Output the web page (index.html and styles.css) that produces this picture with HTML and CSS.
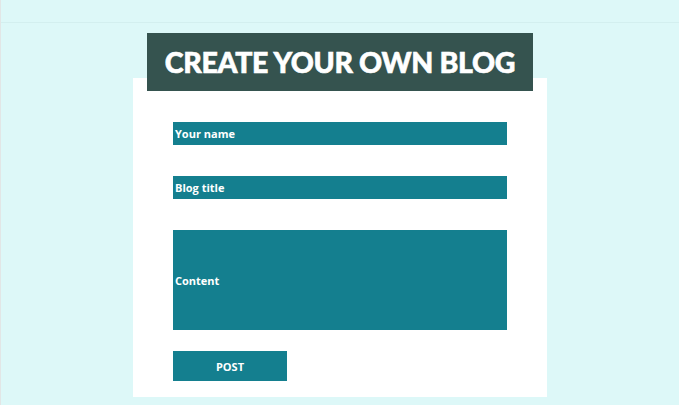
FILE: index.html
```html
<!DOCTYPE html>
<html>
<head>
<meta charset="utf-8">
<link rel="stylesheet" href="styles.css">
</head>
<body>
<div class="page">
  <div class="topband"></div>
  <main class="wrap">
    <h1 class="title">CREATE YOUR OWN BLOG</h1>
    <form class="card">
      <div class="field field-short">Your name</div>
      <div class="field field-short">Blog title</div>
      <div class="field field-tall">Content</div>
      <div class="post">POST</div>
    </form>
  </main>
</div>
</body>
</html>
```
FILE: styles.css
```css
html, body {
  margin: 0;
  padding: 0;
  background: #ddf8f8;
}
.page {
  min-height: 405px;
  border-left: 1px solid #e2e6e6;
  box-sizing: border-box;
  font-family: "Open Sans", "Liberation Sans", sans-serif;
}
.topband {
  height: 22px;
  border-bottom: 1px solid #d3efef;
}
.wrap {
  width: 414px;
  margin: 0 auto;
  padding-top: 10px;
  display: flex;
  flex-direction: column;
  align-items: center;
}
.title {
  position: relative;
  z-index: 1;
  margin: 0 0 -13px 0;
  width: 386px;
  height: 58px;
  box-sizing: border-box;
  background: #35534f;
  color: #ffffff;
  font-family: "Lato", "Open Sans", sans-serif;
  font-weight: 900;
  font-size: 28.5px;
  letter-spacing: -0.3px;
  -webkit-text-stroke: 0.6px #ffffff;
  line-height: 58px;
  text-align: center;
}
.card {
  width: 414px;
  box-sizing: border-box;
  background: #ffffff;
  padding: 44px 40px 16px 40px;
  margin: 0;
  display: flex;
  flex-direction: column;
  gap: 31px;
}
.field {
  width: 334px;
  background: #147f8f;
  color: #ffffff;
  font-weight: 700;
  font-size: 11px;
  padding-left: 2px;
  box-sizing: border-box;
  display: flex;
  align-items: center;
}
.field-short {
  height: 23px;
}
.field-tall {
  height: 100px;
}
.post {
  margin-top: -10px;
  width: 114px;
  height: 30px;
  background: #147f8f;
  color: #ffffff;
  font-weight: 700;
  font-size: 11px;
  display: flex;
  align-items: center;
  justify-content: center;
}
```
